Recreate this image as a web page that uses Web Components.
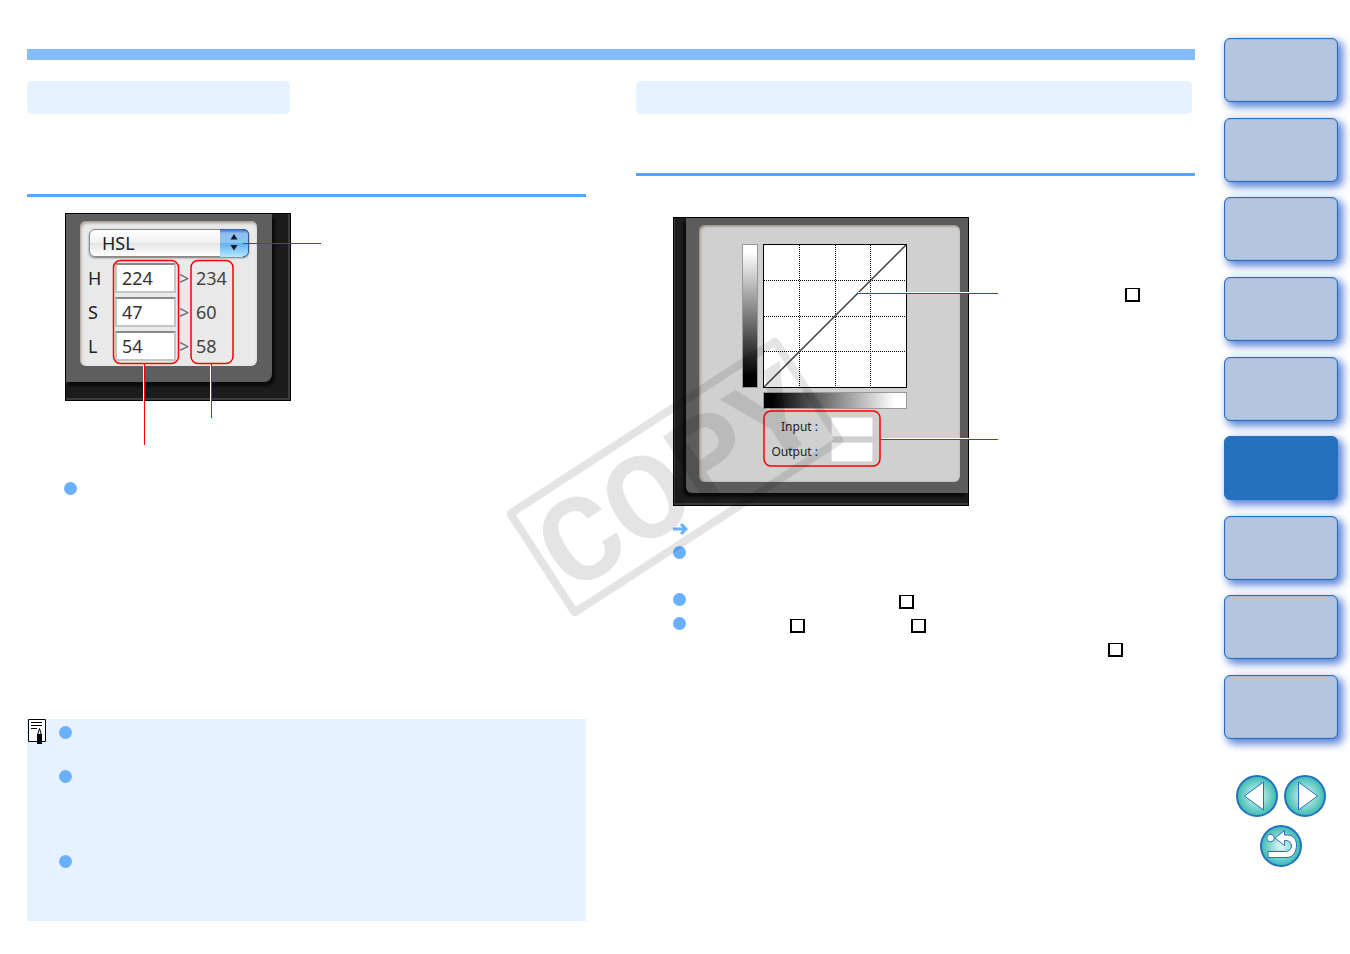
<!DOCTYPE html>
<html lang="en">
<head>
<meta charset="utf-8">
<title>Color picker tool functions</title>
<style>
  body {
    margin: 0;
    background: #fff;
    font-family: "Noto Sans", "Open Sans", sans-serif;
  }
</style>
</head>
<body>
<manual-page>
  <manual-column slot="column">
    <section-title style="--title-width: 47%; --rule-gap: 80px"></section-title>
    <hsl-panel style="margin: 16px 0 0 38px"></hsl-panel>
    <bullet-list style="margin: 76px 0 0 37px">
      <bullet-item></bullet-item>
    </bullet-list>
    <note-box>
      <bullet-item style="--item-height: 44px"></bullet-item>
      <bullet-item style="--item-height: 85px"></bullet-item>
      <bullet-item style="--item-height: 69px"></bullet-item>
    </note-box>
  </manual-column>

  <manual-column slot="column">
    <section-title style="--title-width: 556px; --rule-gap: 59px"></section-title>
    <div style="display: flex; margin: 41px 0 0 37px">
      <curve-panel></curve-panel>
      <key-box style="margin: 71px 0 0 156px"></key-box>
    </div>
    <bullet-list style="margin: 11px 0 0 37px">
      <bullet-item kind="arrow"></bullet-item>
      <bullet-item style="--item-height: 47px"></bullet-item>
      <bullet-item><key-box style="margin-left: 211px"></key-box></bullet-item>
      <bullet-item><key-box style="margin-left: 102px"></key-box><key-box style="margin-left: 106px"></key-box></bullet-item>
      <bullet-item kind="none"><key-box style="margin-left: 435px"></key-box></bullet-item>
    </bullet-list>
  </manual-column>

  <chapter-tabs slot="side" count="9" current="6"></chapter-tabs>
  <page-controls slot="side"></page-controls>
  <copy-stamp slot="stamp">COPY</copy-stamp>
</manual-page>

<script>
function define(name, html, setup) {
  const template = document.createElement("template");
  template.innerHTML = html;
  customElements.define(name, class extends HTMLElement {
    connectedCallback() {
      if (this.shadowRoot) return;
      this.attachShadow({ mode: "open" }).appendChild(template.content.cloneNode(true));
      if (setup) setup(this, this.shadowRoot);
    }
  });
}

define("manual-page", `
  <style>
    :host {
      display: flex;
      position: relative;
      box-sizing: border-box;
      min-height: 100vh;
      padding: 0 12px 33px 27px;
      overflow: hidden;
    }
    main { flex: 1; min-width: 0; padding-top: 49px; }
    .bar { height: 11px; background: #84bdff; }
    .columns {
      display: grid;
      grid-template-columns: repeat(2, minmax(0, 1fr));
      column-gap: 50px;
      padding-top: 21px;
    }
    aside { width: 114px; margin-left: 29px; padding-top: 38px; }
  </style>
  <main>
    <div class="bar"></div>
    <div class="columns"><slot name="column"></slot></div>
  </main>
  <aside><slot name="side"></slot></aside>
  <slot name="stamp"></slot>
`);

define("manual-column", `
  <style>
    :host { display: block; min-width: 0; }
  </style>
  <slot></slot>
`);

define("section-title", `
  <style>
    :host { display: block; }
    .title {
      width: var(--title-width);
      max-width: 100%;
      height: 33px;
      border-radius: 5px;
      background: #e6f2ff;
    }
    hr { height: 3px; margin: var(--rule-gap) 0 0; border: 0; background: #5aa5fb; }
  </style>
  <div class="title"><slot></slot></div>
  <hr>
`);

define("key-box", `
  <style>
    :host {
      display: block;
      flex: none;
      box-sizing: border-box;
      width: 15px;
      height: 14px;
      border: 2px solid #000;
      border-top-width: 1px;
    }
  </style>
`);

define("bullet-list", `
  <style>
    :host { display: block; }
  </style>
  <div role="list"><slot></slot></div>
`);

define("bullet-item", `
  <style>
    :host { display: flex; height: var(--item-height, 24px); }
    .row { display: flex; align-items: center; height: 24px; }
    svg { flex: none; width: 15px; height: 16px; fill: #6bb0ff; }
    ::slotted(*) { position: relative; top: 2px; }
    .arrow { display: none; fill: none; stroke: #6bb0ff; stroke-width: 3; }
    :host([kind]) .dot { display: none; }
    :host([kind="arrow"]) .arrow { display: block; }
  </style>
  <div class="row" role="listitem">
    <svg class="dot" viewBox="0 0 15 16"><circle cx="6.5" cy="7.5" r="6.5"/></svg>
    <svg class="arrow" viewBox="0 0 15 16"><path d="M0 8H13M8 3L13 8L8 13"/></svg>
    <slot></slot>
  </div>
`);

define("note-box", `
  <style>
    :host {
      display: flex;
      margin-top: 218px;
      background: #e6f2ff;
    }
    svg { flex: none; width: 20px; height: 26px; }
    .items { flex: 1; padding: 2px 0 2px 12px; }
  </style>
  <svg viewBox="0 0 20 26">
    <path d="M1.5 .5H18.5V22.5H1.5Z" fill="#fff" stroke="#000"/>
    <path d="M4 3.5H15M4 6.5H15M4 9.5H10" stroke="#000"/>
    <path d="M10.5 16L12.5 9.5L14.5 16Z" fill="#fff" stroke="#000"/>
    <path d="M10 15H15V25H10Z"/>
  </svg>
  <div class="items"><slot></slot></div>
`);

define("hsl-panel", `
  <style>
    :host {
      display: block;
      position: relative;
      box-sizing: border-box;
      width: 226px;
      padding: 0 18px 18px 0;
      border: 1px solid #000;
      background: #1c1c1c;
      box-shadow: inset -2px -2px #3c3c3c;
      font-size: 18px;
      line-height: 30px;
      color: #222;
    }
    .bezel {
      padding: 7px 15px 16px 14px;
      border-radius: 0 0 8px 0;
      background: #5e5e5e;
      box-shadow: 3px 4px 3px #0a0a0a;
    }
    .panel {
      padding: 8px 8px 5px 9px;
      border-radius: 6px;
      background: #e9e9e9;
      box-shadow: inset 1px 2px 3px #a39a8c;
    }
    .mode { position: relative; }
    select {
      display: block;
      appearance: none;
      box-sizing: border-box;
      width: 100%;
      height: 28px;
      padding: 0 12px;
      border: 1px solid #888;
      border-radius: 6px;
      background: linear-gradient(#fff, #f1f1f1 50%, #e4e4e4 50%, #fff);
      box-shadow: 0 1px 2px #777;
      font: inherit;
      line-height: 26px;
      color: inherit;
    }
    .mode svg { position: absolute; top: 0; right: 0; width: 29px; height: 28px; pointer-events: none; }
    .rows {
      display: grid;
      grid-template-columns: 26px 61px 20px 1fr;
      row-gap: 4px;
      margin-top: 6px;
    }
    label { margin-left: -1px; }
    input {
      box-sizing: border-box;
      width: 100%;
      height: 30px;
      padding: 0 5px;
      border: 2px solid #c4c4c4;
      border-top-color: #888;
      background: #fff;
      font: inherit;
      color: #333;
    }
    .gt { padding-left: 3px; color: #666; }
    output { color: #444; }
    .marks { position: absolute; top: -1px; left: -1px; width: 226px; height: 188px; overflow: visible; pointer-events: none; }
  </style>
  <div class="bezel">
    <div class="panel">
      <div class="mode">
        <select aria-label="Color mode"><option>HSL</option></select>
        <svg viewBox="0 0 29 28">
          <defs>
            <linearGradient id="blue" x2="0" y2="1">
              <stop offset="0" stop-color="#2a62b8"/>
              <stop offset=".15" stop-color="#8fbdec"/>
              <stop offset=".5" stop-color="#8cc6f6"/>
              <stop offset=".52" stop-color="#62b1f2"/>
              <stop offset="1" stop-color="#b5eaff"/>
            </linearGradient>
          </defs>
          <path d="M0 0H23Q29 0 29 6V22Q29 28 23 28H0Z" fill="url(#blue)"/>
          <path d="M23 .5Q28.5 .5 28.5 6V22Q28.5 27.5 23 27.5" fill="none" stroke="#2b5a9c"/>
          <path d="M10.5 10.5L14 5L17.5 10.5ZM10.5 16L14 21.5L17.5 16Z" fill="#151b28"/>
        </svg>
      </div>
      <div class="rows">
        <label for="h">H</label><input id="h" value="224"><span class="gt">&gt;</span><output>234</output>
        <label for="s">S</label><input id="s" value="47"><span class="gt">&gt;</span><output>60</output>
        <label for="l">L</label><input id="l" value="54"><span class="gt">&gt;</span><output>58</output>
      </div>
    </div>
  </div>
  <svg class="marks" viewBox="0 0 226 188" fill="none" stroke="#f00">
    <path d="M78.5 152V188M145.5 152V188" stroke="#fff"/>
    <rect x="48.5" y="47.5" width="65" height="103" rx="7" stroke-width="1.5"/>
    <rect x="126" y="47.5" width="42" height="103" rx="7" stroke-width="1.5"/>
    <path d="M79.5 151V232M146.5 151V205M178 30.5H256"/>
  </svg>
`);

define("curve-panel", `
  <style>
    :host {
      display: block;
      position: relative;
      flex: none;
      box-sizing: border-box;
      width: 296px;
      padding: 0 0 12px 12px;
      border: 1px solid #000;
      background: #1e1e1e;
      box-shadow: inset 1px -2px #3a3a3a;
      font-size: 12px;
      line-height: 20px;
      color: #222;
    }
    .bezel {
      padding: 7px 8px 11px 13px;
      border-radius: 0 0 0 6px;
      background: #5c5c5c;
      box-shadow: -3px 4px 3px #0a0a0a;
      clip-path: inset(0 0 -12px -12px);
    }
    .panel {
      padding: 19px 0 20px 43px;
      border-radius: 6px;
      background: #d0d0d0;
      box-shadow: inset 1px 1px 3px #8a7f72;
    }
    .chart {
      display: grid;
      grid-template-columns: 16px 144px;
      grid-template-rows: 144px 17px;
      gap: 4px 5px;
    }
    .chart svg { display: block; width: 144px; height: 144px; }
    .tone { border: 1px solid #999; background: linear-gradient(#fff 5%, #000 92%); }
    .tone.across { grid-column: 2; background: linear-gradient(90deg, #000 5%, #fff 92%); }
    .fields {
      display: grid;
      grid-template-columns: 76px 42px;
      gap: 5px 13px;
      margin-top: 8px;
    }
    label { text-align: right; white-space: nowrap; }
    input {
      box-sizing: border-box;
      width: 100%;
      height: 20px;
      padding: 0 4px;
      border: 1px solid #e2e2e2;
      background: #fff;
      font: inherit;
    }
    .marks { position: absolute; top: -1px; left: -1px; width: 296px; height: 289px; overflow: visible; pointer-events: none; }
  </style>
  <div class="bezel">
    <div class="panel">
      <div class="chart">
        <div class="tone"></div>
        <svg viewBox="0 0 144 144" fill="none" stroke="#000">
          <rect x=".5" y=".5" width="143" height="143" fill="#fff"/>
          <path d="M36.5 1V143M72.5 1V143M107.5 1V143M1 36.5H143M1 72.5H143M1 107.5H143" stroke-dasharray="1 1"/>
          <path d="M1 143L143 1" stroke="#444" stroke-width="1.5"/>
        </svg>
        <div class="tone across"></div>
      </div>
      <div class="fields">
        <label for="in">Input :</label><input id="in">
        <label for="out">Output :</label><input id="out">
      </div>
    </div>
  </div>
  <svg class="marks" viewBox="0 0 296 289" fill="none" stroke="#f00">
    <path d="M185 75.5H296M209 221.5H296" stroke="#fff"/>
    <rect x="91" y="194" width="116" height="55" rx="7" stroke-width="1.5"/>
    <path d="M184 76.5H325M208 222.5H325"/>
  </svg>
`);

define("chapter-tabs", `
  <style>
    :host { display: block; }
    nav { display: flex; flex-direction: column; justify-content: space-between; height: 701px; }
    a {
      box-sizing: border-box;
      height: 64px;
      border: 1px solid #2671bd;
      border-radius: 6px;
      background: #b5c4df;
      box-shadow: inset 0 0 1px #2671bd, 4px 4px 8px 1px #5a83d8;
    }
    a[aria-current] { background: #2671bd; }
  </style>
  <nav></nav>
`, (host, root) => {
  const nav = root.querySelector("nav");
  for (let i = 1; i <= Number(host.getAttribute("count")); i++) {
    const link = document.createElement("a");
    link.href = "#chapter-" + i;
    link.setAttribute("aria-label", "Chapter " + i);
    if (i === Number(host.getAttribute("current"))) link.setAttribute("aria-current", "page");
    nav.appendChild(link);
  }
});

define("page-controls", `
  <style>
    :host {
      display: flex;
      flex-wrap: wrap;
      justify-content: center;
      gap: 8px 6px;
      margin-top: 36px;
    }
    button {
      width: 42px;
      height: 42px;
      box-sizing: border-box;
      padding: 0;
      border: 2px solid #2671bd;
      border-radius: 50%;
      background: radial-gradient(circle, #d5f1ee 10%, #45c0b8 68%);
      cursor: pointer;
    }
    svg { display: block; width: 38px; height: 38px; fill: #fff; stroke: #2671bd; stroke-width: 1; }
  </style>
  <button aria-label="Previous page"><svg viewBox="0 0 38 38"><path d="M6.5 19L25.5 5V33Z"/></svg></button>
  <button aria-label="Next page"><svg viewBox="0 0 38 38"><path d="M31.5 19L12.5 5V33Z"/></svg></button>
  <button aria-label="Back"><svg viewBox="0 0 38 38">
    <circle cx="8.5" cy="11" r="3.8"/>
    <path d="M13 11L22.5 3.5V8H25.5C31 8 34.5 12 34.5 18C34.5 25 31 30.5 25 30.5H6V24.5H23.5C27 24.5 29.5 22 29.5 19C29.5 16 27 13.5 24 13.5H22.5V18.5Z"/>
  </svg></button>
`);

define("copy-stamp", `
  <style>
    :host {
      display: block;
      position: absolute;
      top: 50%;
      left: 50%;
      box-sizing: border-box;
      width: 324px;
      height: 126px;
      border: 8px solid #000;
      border-radius: 5px;
      opacity: .1;
      transform: translate(-50%, -50%) rotate(-33deg);
      font: bold 116px/114px Roboto, "Liberation Sans", sans-serif;
      text-align: center;
      color: #000;
      pointer-events: none;
    }
  </style>
  <slot></slot>
`);
</script>
</body>
</html>
